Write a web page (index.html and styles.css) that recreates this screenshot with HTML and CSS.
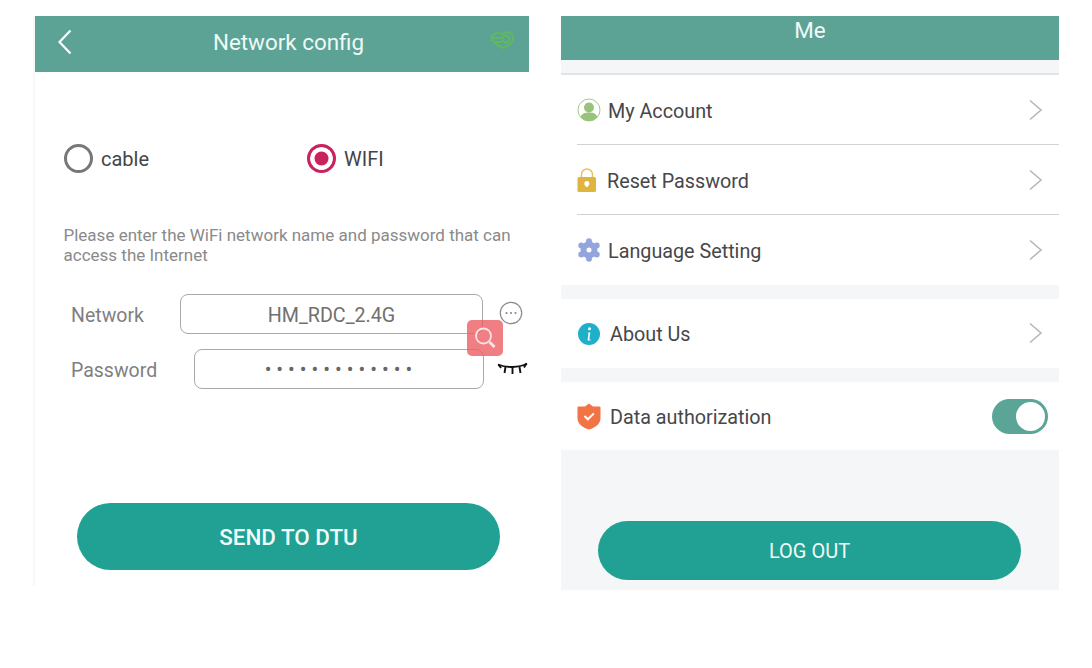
FILE: index.html
```html
<!DOCTYPE html>
<html lang="en">
<head>
<meta charset="utf-8">
<title>Network config and Me</title>
<link rel="stylesheet" href="styles.css">
</head>
<body>
<main class="page">
  <section class="panel-left">
    <header class="net-header">
      <svg class="back" width="16" height="26" viewBox="0 0 16 26"><path d="M13.5 1.5 2.5 13l11 11.5" fill="none" stroke="#fff" stroke-width="2.2"/></svg>
      <h1 class="net-title">Network config</h1>
      <svg class="leaf" width="26" height="20" viewBox="0 0 26 20"><g fill="none" stroke="#5fb862" stroke-width="2"><path d="M2 8C4 3 9 2 13 4c4-3 10-2 11 3 1 5-5 9-10 11C9 16 5 13 2 8Z"/><path d="M3 8h9M6 12h7"/><circle cx="17" cy="9" r="3.5"/></g></svg>
    </header>
    <div class="radios">
      <div class="radio-item radio-cable"><span class="radio"></span><span class="radio-text">cable</span></div>
      <div class="radio-item"><span class="radio radio-on"></span><span class="radio-text">WIFI</span></div>
    </div>
    <p class="hint">Please enter the WiFi network name and password that can access the Internet</p>
    <div class="form">
      <div class="field field-net">
        <span class="field-label">Network</span>
        <div class="input">HM_RDC_2.4G</div>
        <svg class="more" width="24" height="24" viewBox="0 0 24 24"><circle cx="12" cy="12" r="10.7" fill="none" stroke="#8a8a8a" stroke-width="1.2"/><g fill="#8a8a8a"><circle cx="7.5" cy="12" r="1.1"/><circle cx="12" cy="12" r="1.1"/><circle cx="16.5" cy="12" r="1.1"/></g></svg>
      </div>
      <div class="field field-pass">
        <span class="field-label">Password</span>
        <div class="input input-dots">•••••••••••••</div>
        <svg class="eye" width="31" height="14" viewBox="0 0 31 14"><g fill="none" stroke="#111" stroke-width="1.9"><path d="M1 2.500c8 3.500 21 3.500 29-1"/><path d="M8.500 5 7.500 11M15.500 5.500V12M22.500 5l1 6M1.500 2.500 4 6M29.500 1.500 27 5.500"/></g></svg>
      </div>
      <div class="search-badge">
        <svg width="26" height="26" viewBox="0 0 26 26"><g fill="none" stroke="#fbe3e3" stroke-width="1.8"><circle cx="11.500" cy="11" r="7.500"/><path d="m17.500 17 5 5" stroke-width="3"/></g></svg>
      </div>
    </div>
    <div class="send-wrap"><button class="btn btn-send">SEND TO DTU</button></div>
  </section>

  <section class="panel-right">
    <header class="me-header">Me</header>
    <div class="gap gap-top"></div>
    <div class="group">
      <div class="row row-line">
        <svg class="ico" width="24" height="24" viewBox="0 0 24 24"><circle cx="12" cy="12" r="11" fill="#fff" stroke="#a5c98a" stroke-width="1"/><circle cx="12" cy="9.500" r="5" fill="#97c37a"/><path d="M3.500 19c2-4 5-4.500 8.500-4.500s6.500.5 8.500 4.500a11 11 0 0 1-17 0Z" fill="#97c37a"/></svg>
        <span class="row-label">My Account</span>
        <svg class="chev" width="15" height="22" viewBox="0 0 15 22"><path d="m2 1.500 11 9.500L2 20.500" fill="none" stroke="#b5b5b5" stroke-width="1.5"/></svg>
      </div>
      <div class="row row-line">
        <svg class="ico ico-lock" width="20" height="24" viewBox="0 0 20 24"><path d="M4.500 11V6.500a5.500 5.500 0 0 1 11 0V11" fill="none" stroke="#e6c35c" stroke-width="1.5"/><rect x="0.500" y="9" width="18.500" height="15" rx="1.5" fill="#e0b53e"/><circle cx="9.800" cy="15.500" r="2.500" fill="#fff"/><path d="M8.800 16h2v3h-2z" fill="#fff"/></svg>
        <span class="row-label">Reset Password</span>
        <svg class="chev" width="15" height="22" viewBox="0 0 15 22"><path d="m2 1.500 11 9.500L2 20.500" fill="none" stroke="#b5b5b5" stroke-width="1.5"/></svg>
      </div>
      <div class="row row-plain">
        <svg class="ico" width="24" height="24" viewBox="0 0 24 24"><circle cx="12" cy="12" r="5.500" fill="none" stroke="#93a5dc" stroke-width="6"/><g fill="#93a5dc"><circle cx="12" cy="3.200" r="3"/><circle cx="12" cy="20.800" r="3"/><circle cx="4.300" cy="7.600" r="3"/><circle cx="19.700" cy="7.600" r="3"/><circle cx="4.300" cy="16.400" r="3"/><circle cx="19.700" cy="16.400" r="3"/></g></svg>
        <span class="row-label">Language Setting</span>
        <svg class="chev" width="15" height="22" viewBox="0 0 15 22"><path d="m2 1.500 11 9.500L2 20.500" fill="none" stroke="#b5b5b5" stroke-width="1.5"/></svg>
      </div>
    </div>
    <div class="gap"></div>
    <div class="group">
      <div class="row row-about">
        <svg class="ico" width="24" height="24" viewBox="0 0 24 24"><circle cx="12" cy="12" r="11" fill="#1fafc9"/><circle cx="12.500" cy="6.800" r="1.500" fill="#fff"/><path d="M11 10.500h2.300l-1 7h1.200v1h-3l1-7H11z" fill="#fff"/></svg>
        <span class="row-label row-label-wide row-label-low">About Us</span>
        <svg class="chev" width="15" height="22" viewBox="0 0 15 22"><path d="m2 1.500 11 9.500L2 20.500" fill="none" stroke="#b5b5b5" stroke-width="1.5"/></svg>
      </div>
    </div>
    <div class="gap"></div>
    <div class="group">
      <div class="row row-short">
        <svg class="ico" width="24" height="27" viewBox="0 0 24 27"><path d="M12 0.500 16 3.500h6.500a1 1 0 0 1 1 1V15c0 6-5 9.500-11.500 11.500C5.500 24.500.5 21 .5 15V4.500a1 1 0 0 1 1-1H8Z" fill="#f27446"/><path d="m7.500 13 3.300 3.300 6-5.800" fill="none" stroke="#fff" stroke-width="2"/></svg>
        <span class="row-label row-label-wide row-label-low">Data authorization</span>
        <span class="toggle"><span class="knob"></span></span>
      </div>
    </div>
    <div class="logout-wrap"><button class="btn btn-logout">LOG OUT</button></div>
  </section>
</main>
</body>
</html>
```
FILE: styles.css
```css
* { box-sizing: border-box; }
html, body { margin: 0; padding: 0; background: #fff; }
body { font-family: Roboto, "Liberation Sans", sans-serif; color: #4a4a4c; }
.page { display: flex; align-items: flex-start; width: 1092px; height: 668px; padding: 16px 0 0 35px; gap: 32px; overflow: hidden; }

/* left */
.panel-left { position: relative; width: 494px; height: 570px; display: flex; flex-direction: column; box-shadow: -2px 0 0 #f8f8f8; }
.net-header { display: flex; align-items: center; justify-content: space-between; height: 56px; padding: 0 14px 4px 22px; background: #5ca395; color: #eefaf6; }
.net-title { margin: 0; font-size: 22.4px; font-weight: 400; line-height: 28px; position: absolute; left: 0; right: 0; top: 12px; text-align: center; padding-left: 13px; }
.leaf { margin-top: -4px; }
.radios { display: flex; padding: 71px 0 0 29px; height: 100px; }
.radio-item { display: flex; align-items: center; gap: 8px; height: 30px; font-size: 20px; color: #454547; }
.radio-text { padding-top: 2px; }
.radio-cable { width: 243px; }
.radio { width: 29px; height: 29px; border-radius: 50%; border: 3px solid #777; display: block; background: #fff; }
.radio-on { border-color: #c9225f; background: #c9225f; box-shadow: inset 0 0 0 4.5px #fff; }
.hint { margin: 53px 0 0; padding: 0 14px 0 28.5px; font-size: 17px; line-height: 20px; color: #8a8a8a; height: 69px; }
.form { position: relative; padding: 0 0 0 36px; }
.field { display: flex; align-items: center; color: #7f7f7f; font-size: 19.5px; }
.field-label { display: block; padding-top: 2px; }
.input { height: 40px; border: 1px solid #a9a9a9; border-radius: 8px; display: flex; align-items: center; justify-content: center; background: #fff; color: #707070; font-size: 19.7px; padding-top: 2px; }
.field-net .field-label { width: 109px; }
.field-net .input { width: 303px; }
.more { margin-left: 16px; margin-top: -2px; }
.field-pass { margin-top: 15px; }
.field-pass .field-label { width: 123px; }
.field-pass .input { width: 290px; }
.input-dots { font-size: 20px; letter-spacing: 5px; color: #666; padding: 0 0 0 4px; }
.eye { margin-left: 13px; margin-top: -1px; }
.search-badge { position: absolute; left: 432px; top: 26px; width: 36px; height: 36px; border-radius: 5px; background: rgba(235, 95, 100, .8); display: flex; align-items: center; justify-content: center; }
.send-wrap { padding: 114px 0 0 42px; }
.btn { display: block; width: 423px; border: 0; color: #f1fbf9; background: #20a193; font-family: inherit; padding: 0; }
.btn-send { height: 67px; border-radius: 34px; font-size: 22.4px; font-weight: 500; }

/* right */
.panel-right { width: 498px; height: 574px; background: #f4f6f8; display: flex; flex-direction: column; }
.me-header { height: 44px; background: #5ca395; color: #eefaf6; font-size: 22.4px; line-height: 28px; text-align: center; }
.gap { height: 14px; background: #f4f6f8; }
.gap-top { height: 15px; border-bottom: 2px solid #e4e4e4; }
.group { background: #fff; }
.row { display: flex; align-items: center; height: 69px; margin-left: 16px; padding-right: 16px; }
.row-line { border-bottom: 1px solid #d2d2d2; height: 70px; }
.row-plain { height: 70px; }
.row-short { height: 68px; padding-right: 11px; }
.ico { flex: none; }
.row-about .chev { margin-top: -2px; }
.row-line .row-label { padding-top: 4px; }
.row-plain .row-label { padding-top: 2px; }
.row-label { flex: 1; margin-left: 7px; font-size: 19.75px; color: #47474a; }
.ico-lock { margin-right: 3px; }
.row-label-wide { margin-left: 9px; }
.row-label-low { padding-top: 2px; }
.toggle { width: 56px; height: 35px; border-radius: 18px; background: #5ba597; display: flex; justify-content: flex-end; align-items: center; padding-right: 3px; }
.knob { width: 29px; height: 29px; border-radius: 50%; background: #fff; display: block; }
.logout-wrap { padding: 71px 0 0 37px; }
.btn-logout { height: 59px; border-radius: 30px; font-size: 20px; }
```
